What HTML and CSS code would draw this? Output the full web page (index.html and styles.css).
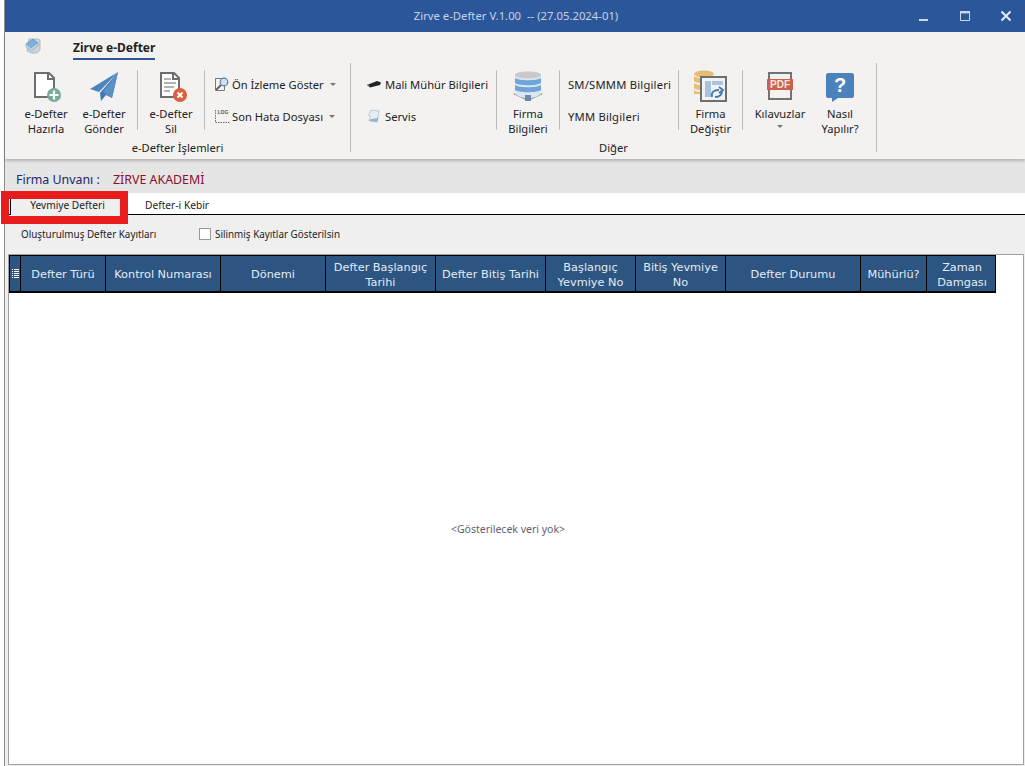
FILE: index.html
```html
<!DOCTYPE html>
<html lang="tr">
<head>
<meta charset="utf-8">
<title>Zirve e-Defter</title>
<link rel="stylesheet" href="styles.css">
</head>
<body>
<div class="window">
  <header class="titlebar">
    <div class="title">Zirve e-Defter V.1.00&nbsp; -- (27.05.2024-01)</div>
    <div class="controls">
      <svg class="ctl" width="12" height="12" viewBox="0 0 12 12"><rect x="1" y="9" width="9" height="2" fill="#cfd8e8"/></svg>
      <svg class="ctl" width="12" height="12" viewBox="0 0 12 12"><path d="M1.500 1.500h9v9h-9z" fill="none" stroke="#cfd8e8"/><rect x="1" y="1" width="10" height="2.400" fill="#cfd8e8"/></svg>
      <svg class="ctl" width="12" height="12" viewBox="0 0 12 12"><path d="M1.500 1.500l9 9M10.500 1.500l-9 9" stroke="#e4e9f2" stroke-width="2"/></svg>
    </div>
  </header>

  <section class="ribbon">
    <div class="ribbon-tabs">
      <svg class="app-icon" width="18" height="18" viewBox="0 0 18 18">
        <path d="M5 2h10l1 2v9l-3 3H7L3 14z" fill="#d5d5d5" stroke="#a8a8a8" stroke-width=".7"/>
        <path d="M2 7l7-5 5 4-7 5z" fill="#7fb0dc" stroke="#5a8fc0" stroke-width=".7"/>
        <path d="M2 7v3l5 4 7-5V6l-7 5z" fill="#b8d2ea" stroke="#8fa9c0" stroke-width=".6"/>
      </svg>
      <div class="ribbon-tab">Zirve e-Defter</div>
    </div>
    <div class="groups">
      <div class="group group-one">
        <div class="group-row">
          <div class="big w58">
            <svg class="icon" width="32" height="32" viewBox="0 0 32 32">
              <path d="M5 3h14l5 5v19H5z" fill="#fff" stroke="#6e6e6e" stroke-width="2"/>
              <path d="M18 3v6h6" fill="none" stroke="#6e6e6e" stroke-width="2"/>
              <circle cx="24" cy="25" r="7" fill="#78ab9a"/>
              <path d="M24 20.500v9M19.500 25h9" stroke="#fff" stroke-width="2.200"/>
            </svg>
            <span>e-Defter<br>Hazırla</span>
          </div>
          <div class="big w58">
            <svg class="icon" width="32" height="32" viewBox="0 0 32 32">
              <path d="M30 2L2 19l9 3z" fill="#4d84bb"/>
              <path d="M30 2L12 23l1 8 5-6 6 3z" fill="#3f79b3"/>
              <path d="M30 2L15 22l9 6z" fill="#5b90c4"/>
            </svg>
            <span>e-Defter<br>Gönder</span>
          </div>
          <div class="sep sep-left"></div>
          <div class="big w66">
            <svg class="icon" width="32" height="32" viewBox="0 0 32 32">
              <path d="M6 3h13l5 5v19H6z" fill="#fff" stroke="#6e6e6e" stroke-width="2"/>
              <path d="M18 3v6h6" fill="none" stroke="#6e6e6e" stroke-width="2"/>
              <path d="M9 9h7M9 13h12M9 17h10M9 21h6" stroke="#9a9a9a" stroke-width="1.600"/>
              <circle cx="25" cy="25" r="7" fill="#d95f3d"/>
              <path d="M22.500 22.500l5 5M27.500 22.500l-5 5" stroke="#fff" stroke-width="2"/>
            </svg>
            <span>e-Defter<br>Sil</span>
          </div>
          <div class="sep"></div>
          <div class="small-col col-preview">
            <div class="small">
              <svg class="sicon" width="16" height="16" viewBox="0 0 16 16">
                <path d="M1.500 2.500h7M1.500 2.500v12h9v-5" fill="none" stroke="#7a7a7a"/>
                <circle cx="10" cy="6" r="3.800" fill="#cfe2f3" stroke="#5b7f9f" stroke-width="1.200"/>
                <path d="M7 9l-5 5" stroke="#5f5f5f" stroke-width="1.800"/>
              </svg>
              <span>Ön İzleme Göster</span><i class="caret"></i>
            </div>
            <div class="small">
              <svg class="sicon" width="16" height="16" viewBox="0 0 16 16">
                <path d="M1.500 2v12.500h14" fill="none" stroke="#6a6a6a" stroke-dasharray="1.500 1"/>
                <text x="3.500" y="6" class="log">LOG</text>
              </svg>
              <span>Son Hata Dosyası</span><i class="caret"></i>
            </div>
          </div>
        </div>
        <div class="group-label">e-Defter İşlemleri</div>
      </div>

      <div class="group group-two">
        <div class="group-row">
          <div class="small-col col-mali">
            <div class="small">
              <svg class="sicon" width="16" height="16" viewBox="0 0 16 16">
                <path d="M1 9l10-4 4 1.500-1 2.500-10 2.500z" fill="#222"/>
                <path d="M1 9l2-.800.500 2.500z" fill="#777"/>
              </svg>
              <span>Mali Mühür Bilgileri</span>
            </div>
            <div class="small">
              <svg class="sicon" width="16" height="16" viewBox="0 0 16 16">
                <path d="M5 2l8 1-2 11-8-1.500 1.500-4-2-1z" fill="#e6edf5" stroke="#a9b4bf" stroke-width=".7"/>
                <path d="M3 13l8 1 2-5-1 1-7 1z" fill="#8fb5dc"/>
              </svg>
              <span>Servis</span>
            </div>
          </div>
          <div class="sep"></div>
          <div class="big w62">
            <svg class="icon" width="32" height="32" viewBox="0 0 32 32">
              <path d="M1 24l15 7 15-7-15-6z" fill="#8d9297"/>
              <path d="M3 5c0-5 26-5 26 0v19c-3 2-7 4-13 5-6-1-10-3-13-5z" fill="#dbe6f0"/>
              <ellipse cx="16" cy="5" rx="13" ry="3.500" fill="#c9c9c9"/>
              <path d="M3 8c4 3 22 3 26 0v5c-4 3-22 3-26 0zM3 15c4 3 22 3 26 0v5c-4 3-22 3-26 0z" fill="#6fa5d8"/>
              <path d="M13 25h6v6h-6z" fill="#6f8ba5"/>
            </svg>
            <span>Firma<br>Bilgileri</span>
          </div>
          <div class="sep"></div>
          <div class="small-col col-sm">
            <div class="small"><span>SM/SMMM Bilgileri</span></div>
            <div class="small"><span>YMM Bilgileri</span></div>
          </div>
          <div class="sep"></div>
          <div class="big w63">
            <svg class="icon" width="36" height="32" viewBox="0 0 36 32">
              <ellipse cx="11" cy="4" rx="10" ry="3.500" fill="#e8bd72"/>
              <path d="M1 6c2 3 18 3 20 0v5c-2 3-18 3-20 0zM1 13c2 3 18 3 20 0v5c-2 3-18 3-20 0z" fill="#e8bd72"/>
              <path d="M1 20c2 3 18 3 20 0v4H1z" fill="#e8bd72"/>
              <rect x="8" y="7" width="25" height="24" fill="#f3f2f1" stroke="#6e6e6e" stroke-width="2"/>
              <path d="M12 11h6v16h-6zM19 11h11v4H19z" fill="#a9c3df"/>
              <path d="M19 27c-1-5 2-7 7-7M26 17l4 3-4 3M29 21c0 4-3 6-7 6" fill="none" stroke="#3e78b2" stroke-width="1.800"/>
            </svg>
            <span>Firma<br>Değiştir</span>
          </div>
          <div class="sep"></div>
          <div class="big w74">
            <svg class="icon" width="32" height="32" viewBox="0 0 32 32">
              <path d="M5 3h22v26H5z" fill="none" stroke="#727272" stroke-width="2"/>
              <rect x="3" y="9" width="26" height="11" fill="#cc6049"/>
              <text x="16" y="18" class="pdf">PDF</text>
            </svg>
            <span>Kılavuzlar</span>
            <i class="caret caret-big"></i>
          </div>
          <div class="big w46">
            <svg class="icon" width="32" height="32" viewBox="0 0 32 32">
              <path d="M4 3h24a2 2 0 0 1 2 2v21a2 2 0 0 1-2 2H14l-6 4v-4H4a2 2 0 0 1-2-2V5a2 2 0 0 1 2-2z" fill="#4c82bc"/>
              <text x="16" y="22" class="qmark">?</text>
            </svg>
            <span>Nasıl<br>Yapılır?</span>
          </div>
        </div>
        <div class="group-label">Diğer</div>
      </div>
    </div>
  </section>

  <div class="firma-bar">
    <span class="firma-key">Firma Unvanı :</span>
    <span class="firma-val">ZİRVE AKADEMİ</span>
  </div>

  <nav class="tabs">
    <div class="tab tab-active">Yevmiye Defteri</div>
    <div class="tab">Defter-i Kebir</div>
    <div class="highlight"></div>
  </nav>

  <main class="panel">
    <div class="filters">
      <span class="filter-title">Oluşturulmuş Defter Kayıtları</span>
      <label class="check"><span class="box"></span>Silinmiş Kayıtlar Gösterilsin</label>
    </div>
    <div class="grid">
      <div class="grid-head">
        <div class="th th-menu">
          <svg width="7" height="10" viewBox="0 0 7 10"><path d="M0 .5h1M2 .5h5M0 2.500h1M2 2.500h5M0 4.500h1M2 4.500h5M0 6.500h1M2 6.500h5M0 8.500h1M2 8.500h5" stroke="#fff"/></svg>
        </div>
        <div class="th">Defter Türü</div>
        <div class="th">Kontrol Numarası</div>
        <div class="th">Dönemi</div>
        <div class="th">Defter Başlangıç Tarihi</div>
        <div class="th">Defter Bitiş Tarihi</div>
        <div class="th">Başlangıç Yevmiye No</div>
        <div class="th">Bitiş Yevmiye No</div>
        <div class="th">Defter Durumu</div>
        <div class="th">Mühürlü?</div>
        <div class="th">Zaman Damgası</div>
      </div>
      <div class="grid-body"><span>&lt;Gösterilecek veri yok&gt;</span></div>
    </div>
  </main>
</div>
</body>
</html>
```
FILE: styles.css
```css
* { box-sizing: border-box; }
html, body { margin: 0; height: 100%; background: #fff; overflow: hidden; }
body { font-family: "Noto Sans", "Open Sans", sans-serif; font-size: 11.200px; color: #222; }

.window {
  width: 1021px;
  height: 766px;
  margin-left: 4px;
  border-left: 1px solid #8c8c8c;
  display: flex;
  flex-direction: column;
  background: #efefef;
}

/* title bar */
.titlebar {
  height: 32px;
  flex: none;
  background: #2b579a;
  display: flex;
  align-items: center;
  justify-content: center;
  position: relative;
  color: #c6d2e6;
  font-size: 11.300px;
}
.title { white-space: pre; margin: -1px 0 0 2px; }
.controls {
  position: absolute;
  right: 13px;
  top: 10px;
  display: flex;
  gap: 29px;
}
.ctl { display: block; }

/* ribbon */
.ribbon {
  height: 127px;
  flex: none;
  background: #f3f2f1;
  box-shadow: 0 2px 3px rgba(0,0,0,.22);
  position: relative;
  z-index: 1;
}
.ribbon-tabs {
  height: 31px;
  display: flex;
  padding-left: 19px;
  padding-top: 5px;
}
.app-icon { display: block; }
.ribbon-tab {
  margin-left: 31px;
  height: 23px;
  padding-top: 2px;
  font-weight: 700;
  font-size: 12px;
  color: #222;
  border-bottom: 2px solid #2b579a;
  width: 82px;
  white-space: nowrap;
  text-align: center;
}
.groups { display: flex; }
.group {
  height: 89px;
  display: flex;
  flex-direction: column;
  border-right: 1px solid #bdbdbd;
}
.group-one { width: 346px; }
.group-two { width: 526px; }
.group-row { display: flex; height: 79px; flex: none; padding-top: 7px; }
.group-one .group-row { padding-left: 12px; }
.group-label { text-align: center; height: 10px; line-height: 12px; flex: none; }

.sep { width: 1px; height: 60px; background: #bdbdbd; flex: none; }
.sep-left { margin-left: 4px; }

.big {
  display: flex;
  flex-direction: column;
  align-items: center;
  flex: none;
  text-align: center;
  line-height: 15px;
}
.big .icon { display: block; margin-bottom: 3.500px; flex: none; }
.big span { white-space: nowrap; }
.w46 { width: 46px; }
.w58 { width: 58px; }
.w62 { width: 62px; }
.w63 { width: 63px; }
.w66 { width: 66px; }
.w74 { width: 74px; }

.small-col { display: flex; flex-direction: column; flex: none; gap: 16px; padding-top: 6px; }
.small { display: flex; align-items: center; height: 16px; white-space: nowrap; }
.sicon { display: block; flex: none; margin-right: 3px; }
.col-preview { padding-left: 9px; }
.col-preview .sicon { margin-right: 2px; }
.col-mali { width: 145px; padding-left: 15px; }
.col-sm { width: 118px; padding-left: 8px; letter-spacing: .22px; }

.caret {
  display: block;
  width: 0;
  height: 0;
  margin-left: 6px;
  border: 3px solid transparent;
  border-top-color: #777;
  border-bottom-width: 0;
}
.caret-big { margin: 4px 0 0; }

.log { font: 700 5px "Liberation Sans", sans-serif; fill: #555; }
.pdf { font: 700 10px "Liberation Sans", sans-serif; fill: #f6e6e0; text-anchor: middle; }
.qmark { font: 700 20px "Liberation Sans", sans-serif; fill: #fff; text-anchor: middle; }

/* company bar */
.firma-bar {
  height: 34px;
  flex: none;
  background: #e5e5e5;
  display: flex;
  align-items: center;
  padding: 7px 0 0 11px;
  font-size: 12.400px;
}
.firma-key { color: #23236b; width: 97px; white-space: nowrap; }
.firma-val { color: #8a0f2b; white-space: nowrap; }

/* tabs */
.tabs {
  height: 22px;
  flex: none;
  display: flex;
  background: #fff;
  border-bottom: 1px solid #000;
  padding: 6px 0 0 5px;
  position: relative;
  font-size: 10.200px;
}
.tab { height: 15px; line-height: 13px; white-space: nowrap; }
.tab-active {
  width: 110px;
  height: 16px;
  background: #efefef;
  border-left: 1px solid #000;
  text-align: center;
  padding-left: 4px;
  margin-right: 25px;
}
.highlight {
  position: absolute;
  left: -4px;
  top: -2px;
  width: 127px;
  height: 33px;
  border: 8px solid #e81c1c;
  pointer-events: none;
}

/* panel */
.panel {
  flex: 1;
  min-height: 0;
  padding: 0 0 1px 3px;
  display: flex;
  flex-direction: column;
}
.filters {
  height: 39px;
  flex: none;
  display: flex;
  align-items: center;
  padding: 0 0 1px 13px;
  font-size: 9.850px;
  color: #222;
}
.filter-title { width: 178px; white-space: nowrap; }
.check { display: flex; align-items: center; white-space: nowrap; }
.box {
  width: 12px;
  height: 12px;
  background: #fff;
  border: 1px solid #9a9a9a;
  margin-right: 4px;
}

/* grid */
.grid {
  flex: 1;
  min-height: 0;
  width: 1016px;
  background: #fff;
  border: 1px solid #a0a0a0;
  display: flex;
  flex-direction: column;
}
.grid-head {
  display: grid;
  grid-template-columns: 12px 85px 115px 105px 110px 110px 90px 90px 135px 66px 70px;
  width: 987px;
  height: 38px;
  flex: none;
  background: #2c5581;
  border: 1px solid #000;
  border-width: 1px 1px 2px 0;
}
.th {
  border-right: 1px solid #000;
  display: flex;
  align-items: center;
  justify-content: center;
  text-align: center;
  color: #e4ebf3;
  font-family: "DejaVu Sans", sans-serif;
  font-size: 11.300px;
  line-height: 15px;
  padding: 2px 2px 0;
}
.th:last-child { border-right: 0; }
.th-menu { border-left: 1px solid #000; padding: 0; }
.th-menu svg { display: block; }
.grid-body {
  flex: 1;
  display: flex;
  align-items: center;
  justify-content: center;
  padding-right: 16px;
  font-size: 10.500px;
  color: #5f5f70;
}
```
